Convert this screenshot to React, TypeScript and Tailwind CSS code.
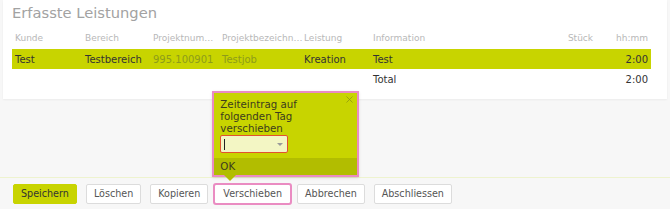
import { X } from "lucide-react";

const font = { fontFamily: '"DejaVu Sans", Verdana, sans-serif' };

const cols = "grid grid-cols-[70px_68px_69px_82px_69px_1fr_55px_55px]";

function ToolButton({ label, primary, active }: { label: string; primary?: boolean; active?: boolean }) {
  if (primary) {
    return (
      <button className="h-[20px] px-[7px] rounded-[2px] bg-[#c8d400] border border-[#c8d400] text-[9.6px] text-[#333] leading-none">
        {label}
      </button>
    );
  }
  return (
    <button
      className={
        active
          ? "h-[20px] px-[8px] rounded-[2px] bg-white border border-[#dcdcdc] text-[9.6px] text-[#555] leading-none outline-2 outline-offset-[-1px] outline-[#ea8cc2]"
          : "h-[20px] px-[7px] rounded-[2px] bg-white border border-[#dcdcdc] text-[9.6px] text-[#555] leading-none"
      }
    >
      {label}
    </button>
  );
}

function MovePopover() {
  return (
    <div className="absolute left-[-2px] bottom-[27px] w-[147px] border-2 border-[#ea8cc2] bg-[#c8d400] shadow-sm">
      <div className="relative px-[6px] pt-[5px] pb-[5px]">
        <button className="absolute right-[2px] top-[1px] text-[#8a9410]">
          <X className="h-[11px] w-[11px]" strokeWidth={1.6} />
        </button>
        <p className="text-[10.25px] leading-[12px] text-[#3c3c1e]">
          Zeiteintrag auf
          <br />
          folgenden Tag
          <br />
          verschieben
        </p>
        <div className="mt-[1px] flex h-[18px] w-[68px] items-center justify-between rounded-[2px] border border-[#e3522e] bg-[#f3f6c4] pl-[3px] pr-[4px]">
          <span className="h-[11px] w-px bg-[#222]" />
          <span className="h-0 w-0 border-x-[3px] border-t-[3px] border-x-transparent border-t-[#9a9a9a]" />
        </div>
      </div>
      <div className="bg-[#b2bd00] px-[6px] h-[17px] flex items-center text-[10.25px] text-[#3c3c1e]">OK</div>
      <span className="absolute left-[10px] top-full h-0 w-0 border-x-[6px] border-t-[6px] border-x-transparent border-t-[#b2bd00]" />
    </div>
  );
}

export default function App() {
  return (
    <div className="w-[670px] h-[209px] bg-[#f7f7f7] flex flex-col overflow-hidden" style={font}>
      <div className="mx-[3px] h-[99px] bg-white shadow-[0_1px_2px_rgba(0,0,0,0.05)] pl-[9px] pr-[16px] pt-[3px]">
        <h2 className="text-[14.7px] leading-[20px] text-[#a2a2a2]">Erfasste Leistungen</h2>
        <div className={`${cols} mt-[7px] h-[18px] items-center text-[9px] text-[#b8b8b8]`}>
          <span className="pl-[3px]">Kunde</span>
          <span className="pl-[3px]">Bereich</span>
          <span className="pl-[3px]">Projektnum…</span>
          <span className="pl-[3px]">Projektbezeichn…</span>
          <span className="pl-[3px]">Leistung</span>
          <span className="pl-[3px]">Information</span>
          <span className="pr-[3px] text-right">Stück</span>
          <span className="pr-[3px] text-right">hh:mm</span>
        </div>
        <div className={`${cols} mt-px h-[20px] items-center bg-[#c8d400] text-[10px] text-[#333]`}>
          <span className="pl-[3px]">Test</span>
          <span className="pl-[3px]">Testbereich</span>
          <span className="pl-[3px] text-[#8d9c1a]">995.100901</span>
          <span className="pl-[3px] text-[#8d9c1a]">Testjob</span>
          <span className="pl-[3px]">Kreation</span>
          <span className="pl-[3px]">Test</span>
          <span className="pr-[3px] text-right"></span>
          <span className="pr-[3px] text-right">2:00</span>
        </div>
        <div className={`${cols} h-[20px] items-center text-[10px] text-[#333]`}>
          <span />
          <span />
          <span />
          <span />
          <span />
          <span className="pl-[3px]">Total</span>
          <span />
          <span className="pr-[3px] text-right">2:00</span>
        </div>
      </div>
      <div className="flex-1" />
      <div className="h-[32px] border-t border-[#eef3cf] flex items-start gap-[9px] pl-[13px] pt-[6px]">
        <ToolButton label="Speichern" primary />
        <ToolButton label="Löschen" />
        <ToolButton label="Kopieren" />
        <div className="relative flex -mx-[3px]">
          <ToolButton label="Verschieben" active />
          <MovePopover />
        </div>
        <ToolButton label="Abbrechen" />
        <ToolButton label="Abschliessen" />
      </div>
    </div>
  );
}
